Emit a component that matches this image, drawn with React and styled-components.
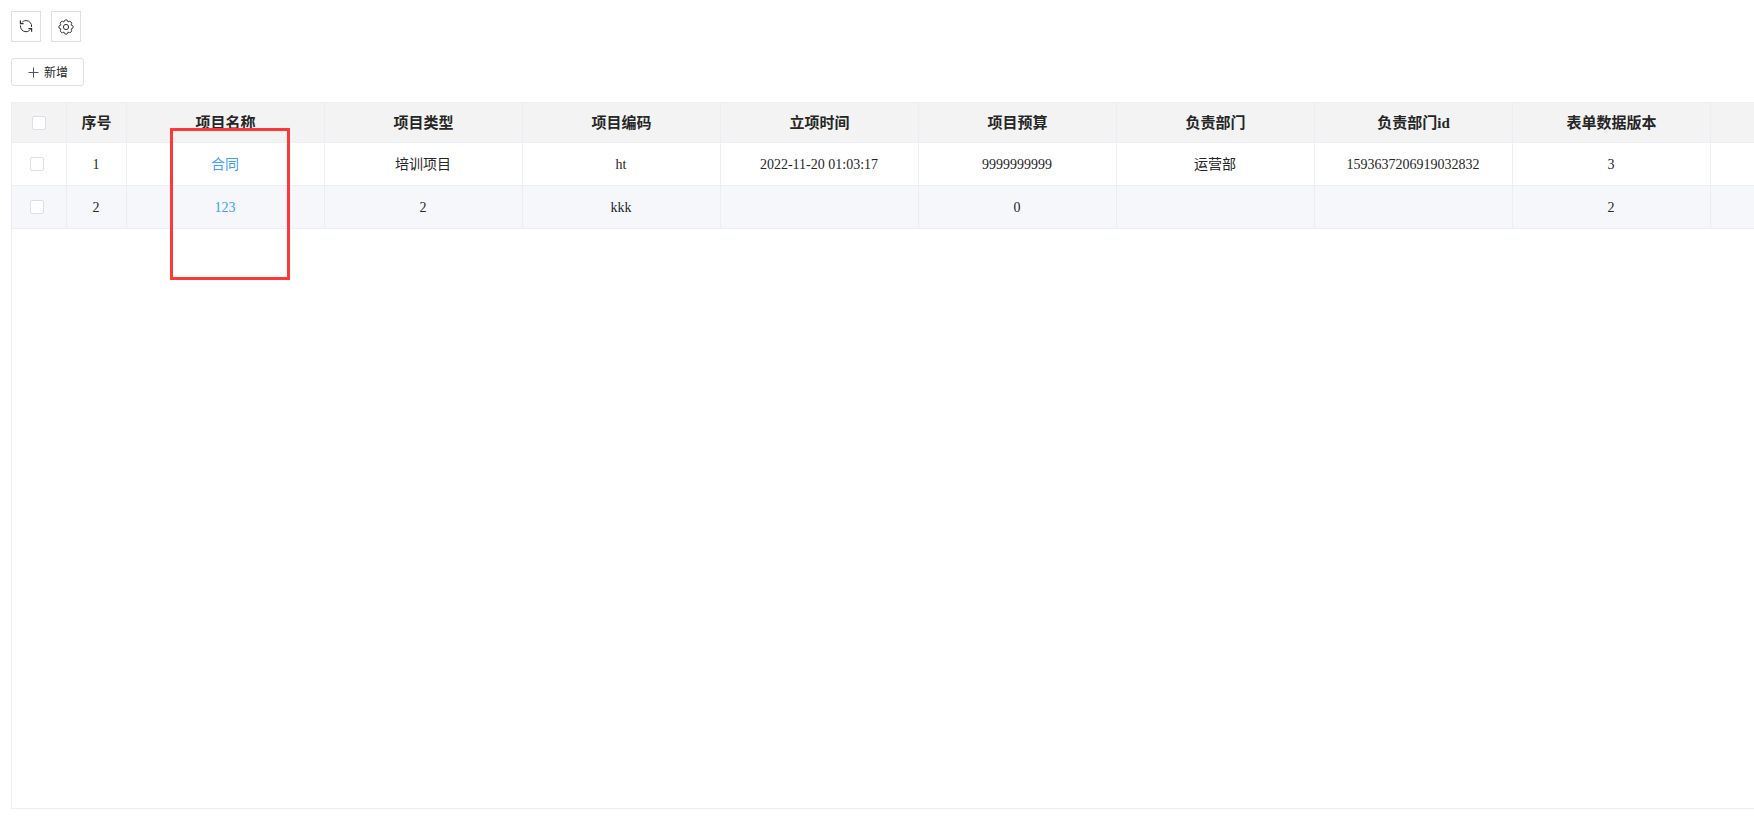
import React from 'react'
import styled, { createGlobalStyle } from 'styled-components'

const GlobalStyle = createGlobalStyle`
  * {
    box-sizing: border-box;
  }

  body {
    margin: 0;
    background: #fff;
    color: #262626;
    font-family: "Liberation Serif", "Noto Sans CJK SC", serif;
    font-size: 14px;
    overflow: hidden;
  }
`

const Page = styled.main`
  display: flex;
  flex-direction: column;
  min-height: 100vh;
  padding: 11px 0 19px 11px;
`

const Toolbar = styled.div`
  display: flex;
  gap: 10px;
  margin-bottom: 16px;
`

const ToolButton = styled.button`
  display: flex;
  align-items: center;
  justify-content: center;
  width: 30px;
  height: 31px;
  padding: 0;
  border: 1px solid #dcdfe6;
  background: #fff;
  color: #303133;
  cursor: pointer;
`

const AddButton = styled.button`
  display: flex;
  align-items: center;
  align-self: flex-start;
  gap: 5px;
  height: 28px;
  margin-bottom: 16px;
  padding: 0 15px 0 16px;
  border: 1px solid #dcdfe6;
  border-radius: 3px;
  background: #fff;
  color: #262626;
  font-family: "Noto Sans CJK SC", sans-serif;
  font-size: 12px;
  line-height: 16px;
  cursor: pointer;
`

const TablePanel = styled.section`
  flex: 1;
  border: 1px solid #ebeef5;
  border-right: 0;
  overflow: hidden;
`

const Table = styled.table`
  width: 100%;
  min-width: 1800px;
  table-layout: fixed;
  border-collapse: separate;
  border-spacing: 0;
`

const HeadCell = styled.th`
  height: 40px;
  padding: 0;
  border-right: 1px solid #ebeef5;
  border-bottom: 1px solid #ebeef5;
  background: #f3f3f3;
  font-size: 15px;
  font-weight: bold;
  line-height: 20px;
`

const Row = styled.tr`
  background: ${(props) => (props.$striped ? '#f5f7fb' : '#fff')};
`

const Cell = styled.td`
  height: 43px;
  padding: ${(props) => (props.$check ? '0 4px 0 0' : '2px 1px 0 0')};
  border-right: 1px solid #ebeef5;
  border-bottom: 1px solid #ebeef5;
  line-height: 20px;
  text-align: center;
`

const Checkbox = styled.input.attrs({ type: 'checkbox' })`
  display: block;
  appearance: none;
  width: 14px;
  height: 14px;
  margin: 0 auto;
  border: 1px solid #dcdfe6;
  border-radius: 2px;
  background: #fff;

  &:checked {
    border-color: #409eff;
    background: #409eff;
  }
`

const NameLink = styled.a`
  color: #409eff;
  text-decoration: none;
`

const Marker = styled.div`
  position: absolute;
  top: 128px;
  left: 170px;
  width: 120px;
  height: 152px;
  border: 3px solid #fc3838;
  pointer-events: none;
`

const columns = [
  { key: 'name', title: '项目名称' },
  { key: 'type', title: '项目类型' },
  { key: 'code', title: '项目编码' },
  { key: 'date', title: '立项时间' },
  { key: 'budget', title: '项目预算' },
  { key: 'dept', title: '负责部门' },
  { key: 'deptId', title: '负责部门id' },
  { key: 'version', title: '表单数据版本' },
]

const projects = [
  {
    name: '合同',
    type: '培训项目',
    code: 'ht',
    date: '2022-11-20 01:03:17',
    budget: '9999999999',
    dept: '运营部',
    deptId: '1593637206919032832',
    version: '3',
  },
  { name: '123', type: '2', code: 'kkk', budget: '0', version: '2' },
]

const RefreshIcon = () => (
  <svg width="14" height="16" viewBox="0 0 14 16" fill="none" stroke="currentColor" aria-hidden="true">
    <path d="M2.6 3.8C4 2.2 5.3 1.6 7 1.6A5.6 5.6 0 0 1 12.6 8M11.4 10.4C10 12 8.7 12.7 7 12.7A5.6 5.6 0 0 1 1.4 6.4" />
    <path d="M1.4 1.6V4.6H4.6M12.6 12.8V9.7H9.4" strokeWidth="1.2" />
  </svg>
)

const point = (deg, r) => {
  const a = (deg * Math.PI) / 180
  return `${(8 + r * Math.sin(a)).toFixed(2)} ${(8 - r * Math.cos(a)).toFixed(2)}`
}

// eight lobes, each one curve from valley to valley
const lobes = [0, 45, 90, 135, 180, 225, 270, 315]
const gearPath =
  'M' + point(-22.5, 5.3) + lobes.map((d) => `C${point(d - 16, 8.2)} ${point(d + 16, 8.2)} ${point(d + 22.5, 5.3)}`).join('') + 'Z'

const GearIcon = () => (
  <svg width="16" height="16" viewBox="0 0 16 16" fill="none" stroke="currentColor" aria-hidden="true">
    <path d={gearPath} strokeLinejoin="round" />
    <circle cx="8" cy="8" r="2.6" />
  </svg>
)

const PlusIcon = () => (
  <svg width="11" height="11" viewBox="0 0 11 11" stroke="#555" aria-hidden="true">
    <path d="M5.5 0.5V10.5M0.5 5.5H10.5" />
  </svg>
)

const ProjectRow = (props) => {
  const { project, index } = props

  return (
    <Row $striped={index % 2 === 1}>
      <Cell $check>
        <Checkbox aria-label={'选择 ' + project.name} />
      </Cell>
      <Cell>{index + 1}</Cell>
      {columns.map((column) => (
        <Cell key={column.key}>
          {column.key === 'name' ? <NameLink href="#">{project.name}</NameLink> : project[column.key]}
        </Cell>
      ))}
      <Cell />
    </Row>
  )
}

const App = () => {
  return (
    <>
      <GlobalStyle />
      <Page>
        <Toolbar>
          <ToolButton type="button" aria-label="刷新">
            <RefreshIcon />
          </ToolButton>
          <ToolButton type="button" aria-label="设置">
            <GearIcon />
          </ToolButton>
        </Toolbar>
        <AddButton type="button">
          <PlusIcon />
          新增
        </AddButton>
        <TablePanel>
          <Table>
            <colgroup>
              <col style={{ width: 55 }} />
              <col style={{ width: 60 }} />
              {columns.map((column) => (
                <col key={column.key} style={{ width: 198 }} />
              ))}
              <col />
            </colgroup>
            <thead>
              <tr>
                <HeadCell>
                  <Checkbox aria-label="全选" />
                </HeadCell>
                <HeadCell>序号</HeadCell>
                {columns.map((column) => (
                  <HeadCell key={column.key}>{column.title}</HeadCell>
                ))}
                <HeadCell />
              </tr>
            </thead>
            <tbody>
              {projects.map((project, index) => (
                <ProjectRow key={project.name} project={project} index={index} />
              ))}
            </tbody>
          </Table>
        </TablePanel>
      </Page>
      <Marker />
    </>
  )
}

export default App
